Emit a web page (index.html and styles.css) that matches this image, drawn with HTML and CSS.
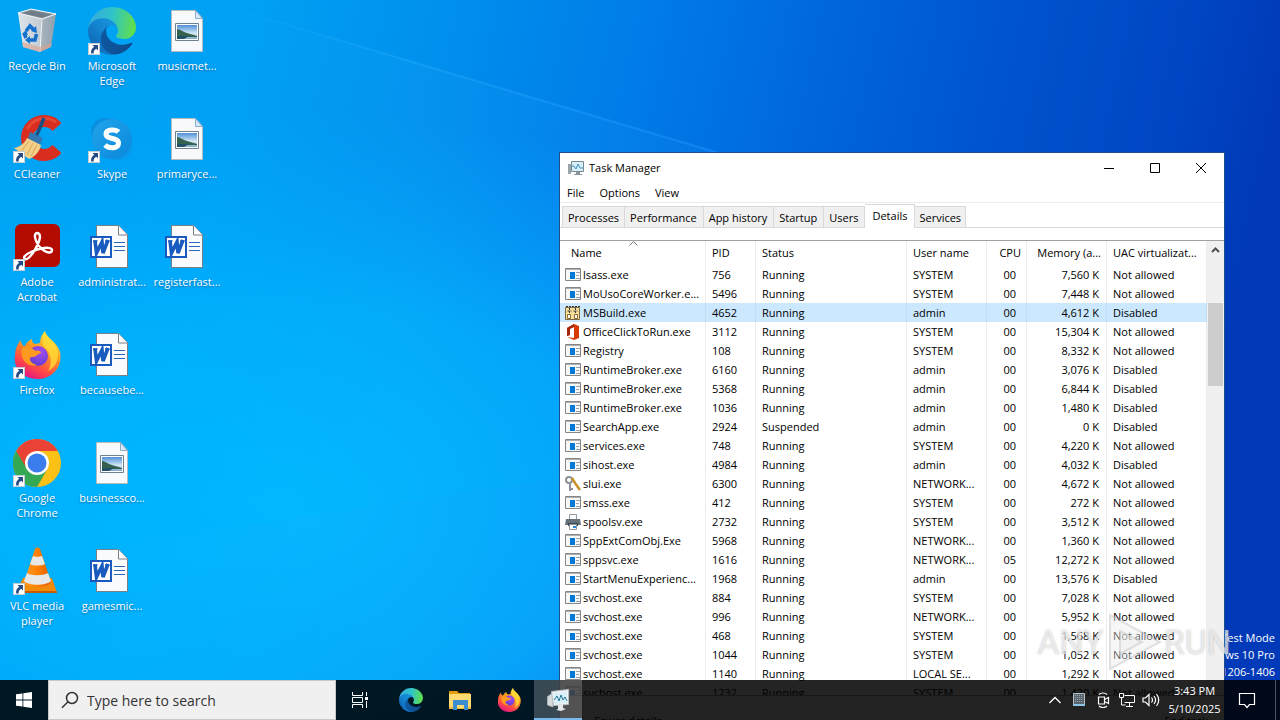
FILE: index.html
```html
<!DOCTYPE html>
<html lang="en">
<head>
<meta charset="utf-8">
<title>Desktop</title>
<link rel="stylesheet" href="styles.css">
</head>
<body>
<svg class="defs" aria-hidden="true">
  <defs>
    <linearGradient id="sky" x1="0" y1="0" x2="1" y2="0.12">
      <stop offset="0" stop-color="#00a4f2"/><stop offset=".2" stop-color="#00a0f4"/><stop offset=".36" stop-color="#008eec"/>
      <stop offset=".5" stop-color="#007ce8"/><stop offset=".66" stop-color="#0064da"/><stop offset=".8" stop-color="#0052cc"/><stop offset=".92" stop-color="#0046c4"/><stop offset="1" stop-color="#003ab8"/>
    </linearGradient>
    <radialGradient id="glow" cx=".22" cy=".7" r=".55">
      <stop offset="0" stop-color="#00b8ff"/><stop offset=".5" stop-color="#00b4ff" stop-opacity=".75"/><stop offset="1" stop-color="#00a8ff" stop-opacity="0"/>
    </radialGradient>
    <linearGradient id="beam" x1="0" y1="0" x2="1" y2="0">
      <stop offset="0" stop-color="#2cb8ff" stop-opacity="0"/><stop offset=".4" stop-color="#2cb0ff" stop-opacity=".5"/><stop offset="1" stop-color="#2090ff" stop-opacity=".6"/>
    </linearGradient>
    <linearGradient id="edgeA" x1="0" y1="0" x2="1" y2="0"><stop offset="0" stop-color="#0c59a4"/><stop offset="1" stop-color="#114a8b"/></linearGradient>
    <linearGradient id="edgeC" x1="1" y1="0" x2="0" y2="1"><stop offset="0" stop-color="#1b9de2"/><stop offset=".5" stop-color="#1383d0"/><stop offset="1" stop-color="#0b5aa8"/></linearGradient>
    <linearGradient id="edgeB" x1="0" y1="0.3" x2="1" y2="0.4"><stop offset="0" stop-color="#35a9e0"/><stop offset=".5" stop-color="#2fc3c8"/><stop offset="1" stop-color="#62e04a"/></linearGradient>
    <linearGradient id="ffx" x1=".8" y1="0" x2=".3" y2="1"><stop offset="0" stop-color="#fff04a"/><stop offset=".4" stop-color="#ff9a1f"/><stop offset=".75" stop-color="#ff4747"/><stop offset="1" stop-color="#e31587"/></linearGradient>
    <radialGradient id="ffp" cx=".6" cy=".3" r=".8"><stop offset="0" stop-color="#a44df0"/><stop offset="1" stop-color="#5a3bd0"/></radialGradient>
    <linearGradient id="skp" x1="0" y1="0" x2="1" y2="1"><stop offset="0" stop-color="#22a6ea"/><stop offset="1" stop-color="#0a86dc"/></linearGradient>
    <linearGradient id="bin" x1="0" y1="0" x2="1" y2="0"><stop offset="0" stop-color="#dfe6ea"/><stop offset=".6" stop-color="#c3ccd3"/><stop offset=".61" stop-color="#a8b4bd"/><stop offset="1" stop-color="#8fa0ad"/></linearGradient>
    <linearGradient id="cone" x1="0" y1="0" x2="1" y2="0"><stop offset="0" stop-color="#ff9a2a"/><stop offset=".5" stop-color="#ff8000"/><stop offset="1" stop-color="#e05e00"/></linearGradient>
    <linearGradient id="photo" x1="0" y1="0" x2="0" y2="1"><stop offset="0" stop-color="#4f90d8"/><stop offset=".6" stop-color="#d5e8f5"/><stop offset="1" stop-color="#7fa9c4"/></linearGradient>

    <symbol id="shortcut" viewBox="0 0 12 12"><path fill="#fff" d="M0 0h12v12H0z"/><path fill="none" stroke="#8a9aa6" d="M.5.5h11v11H.5z" stroke-opacity=".5"/><path fill="#264a86" d="M4.500 2H10v5.500L8.300 5.800C6 7 5.500 8.500 5.700 10.500H3.200C2.500 7.500 4 5.300 6.200 3.700z"/></symbol>

    <symbol id="recycle" viewBox="0 0 48 48">
      <path fill="url(#bin)" d="M5 6l5 34 17 5 11-5 5-33z"/>
      <path fill="#8e9aa3" d="M5 6l13-4 25 5-14 5z"/><path fill="#717d86" d="M9 6.500l9-3 21 4-10 3z"/>
      <path fill="none" stroke="#f3f7f9" d="M5 6l13-4 25 5-14 5zM29 12l-2 33"/>
      <path fill="#e0a08c" opacity=".6" d="M9 35l18 5v5l-17-5zM27 40l12-4-1 4-11 5z"/>
      <g fill="none" stroke="#1571ce" stroke-width="3.600"><path d="M13 24l4-5 4 4M23.500 27l-1.500 6h-6M11 26l2 5"/></g>
      <path fill="#1571ce" d="M23 19l1 7-6-2zM17 29v8l-5-4zM9 27l4-4 2 5z"/>
    </symbol>
    <symbol id="edge" viewBox="4.500 4.500 256.500 256.500">
      <path fill="url(#edgeA)" d="M235.680 195.460a93.730 93.730 0 0 1-10.540 4.710 101.870 101.870 0 0 1-35.900 6.460c-47.320 0-88.540-32.550-88.540-74.320A31.480 31.480 0 0 1 117.130 105c-42.800 1.800-53.800 46.400-53.800 72.530 0 73.880 68.090 81.370 82.760 81.370 7.910 0 19.840-2.300 27-4.560l1.310-.44A128.340 128.340 0 0 0 241 201.100a4 4 0 0 0-5.320-5.640z"/>
      <path fill="url(#edgeC)" d="M110.340 246.340A79.200 79.200 0 0 1 87.600 225a80.720 80.720 0 0 1 29.530-120c3.120-1.470 8.450-4.130 15.540-4a32.350 32.350 0 0 1 25.690 13 31.880 31.880 0 0 1 6.360 18.660c0-.21 24.460-79.600-80-79.600-43.900 0-80 41.660-80 78.210a130.150 130.150 0 0 0 12.110 56 128 128 0 0 0 156.380 67.110 75.550 75.550 0 0 1-62.780-8z"/>
      <path fill="url(#edgeB)" d="M156.940 153.780c-.81 1.050-3.300 2.500-3.300 5.660 0 2.610 1.700 5.120 4.720 7.230 14.380 10 41.490 8.680 41.560 8.680a59.560 59.560 0 0 0 30.270-8.350A61.380 61.380 0 0 0 260.620 114c.26-22.410-8-37.310-11.340-43.910C228.090 28.760 182.350 4.920 132.610 4.920a128 128 0 0 0-128 126.200c.48-36.540 36.800-66.050 80-66.050 3.500 0 23.460.34 42 10.070 16.340 8.580 24.900 18.940 30.850 29.210 6.180 10.670 7.280 24.150 7.280 29.520s-2.740 13.330-7.800 19.910z"/>
    </symbol>
    <symbol id="image-file" viewBox="0 0 48 48">
      <path fill="#f8f9fa" stroke="#b3bcc3" d="M8.500 3.500h24l7 8v33h-31z"/><path fill="#d4eafa" stroke="#8facc2" d="M32.500 3.500v8h7z"/>
      <path fill="#fff" stroke="#6e8192" d="M12.500 16.500h23v17h-23z"/><path fill="url(#photo)" d="M14 18h20v14H14z"/><path fill="#35614f" d="M14 22c3 0 6 3 10 4l10 3v1H14z"/><path fill="#24516a" d="M14 29h12l-5 3h-7z"/>
    </symbol>
    <symbol id="word-file" viewBox="0 0 48 48">
      <path fill="#fafbfc" stroke="#777f87" d="M8.500 2.500h22l9 9v33h-31z"/><path fill="#fff" stroke="#777f87" d="M30.500 2.500v9.500h9"/>
      <path stroke="#2b66b8" d="M26 19.500h11M26 23.500h11M26 27.500h11"/>
      <path fill="#fff" stroke="#185abd" stroke-width="2" d="M3 14h20v20H3z"/><path fill="none" stroke="#185abd" stroke-width="3.600" d="M7 17.500l1.500 12.500 5.500-11 1 11 5-13"/><path fill="none" stroke="#185abd" stroke-width="1.500" d="M5 18h4.500M17 18h4.500"/>
    </symbol>
    <symbol id="ccleaner" viewBox="0 0 48 48">
      <path fill="none" stroke="#d92d20" stroke-width="12" d="M44 12A17 17 0 1 0 44 34"/><path fill="none" stroke="#f05a42" stroke-width="3" d="M43 7A20 20 0 0 0 14 14" opacity=".6"/>
      <path stroke="#1a4f83" stroke-width="3.500" d="M31 3L23 22"/><path fill="#3278b2" d="M17 17l13 6-3 7-12-6z"/>
      <path fill="#f3cf8a" d="M14 23l14 7c-1 6-6 12-12 14L1 33c6-1 11-5 13-10z"/><path stroke="#d8a650" fill="none" d="M16 26L8 37M20 28l-6 12M24 30l-6 11"/>
    </symbol>
    <symbol id="skype" viewBox="0 0 48 48">
      <circle cx="17" cy="17" r="14" fill="#0b8fe0"/><circle cx="30" cy="31" r="14" fill="#0a98e8"/><circle cx="24" cy="24" r="20" fill="url(#skp)"/>
      <path fill="none" stroke="#fff" stroke-width="5" d="M30.500 17c-3-3-12.500-3-12.500 2 0 6 12.500 3 12.500 9 0 6-9.500 6-13.500 2"/>
    </symbol>
    <symbol id="acrobat" viewBox="0 0 48 48">
      <rect x="2" y="1" width="45" height="43" rx="6" fill="#b30b00"/>
      <path fill="none" stroke="#fff" stroke-width="2.400" d="M24 10c-4 0-2 10 5 16 6 5 10 4 10 1 0-4-14-2-21 2-7 3-8 6-6 7 4 2 14-14 15-22 0-3-1-4-3-4z"/>
    </symbol>
    <symbol id="firefox" viewBox="0 0 48 48">
      <path fill="url(#ffx)" d="M8 9c0 4 2 6 4 6 2-4 4-6 7-7 0 3 1 4 3 5l5-1c0-5 2-9 5-12 0 6 12 10 15 21 3 15-8 27-23 27C10 48 0 37 2 25c0-7 3-13 6-16z"/>
      <circle cx="25" cy="25" r="10" fill="url(#ffp)"/>
      <path fill="#ff9a20" d="M9 17c5-3 10 0 14 3 2-1 5 0 5 2-3 0-4 4-9 4-4 0-2 7 5 8-8 3-18-5-15-17z"/>
      <path fill="#ffdf38" d="M32 0c1 7 12 10 13 23 0 9-5 15-10 17 5-8 3-19-4-24-2-5-2-11 1-16z" opacity=".75"/>
    </symbol>
    <symbol id="chrome" viewBox="0 0 48 48">
      <circle cx="24" cy="24" r="24" fill="#fbc116"/><path fill="#ea4335" d="M3.200 12A24 24 0 0 1 44.800 12L24 12l-11 18z"/><path fill="#34a853" d="M3.200 12L14 30l10 6 10.400-6L24 48A24 24 0 0 1 3.200 12z"/>
      <circle cx="24" cy="24" r="12" fill="#fff"/><circle cx="24" cy="24" r="9.500" fill="#3b7ded"/>
    </symbol>
    <symbol id="vlc" viewBox="0 0 48 48">
      <path fill="#f28a0a" d="M10 31h29l5 15H3z"/><path fill="#c85a00" d="M3 44h41v2H3z"/>
      <path fill="url(#cone)" d="M22 2c1-2 4-2 5 0l11 33c-3 7-24 7-27 0z"/><path fill="#e8e8e8" d="M20 9c2 1 7 1 9 0l3 8c-3 2-12 2-15 0zM14 26c4 3 16 3 21 0l3 8c-5 5-22 5-27 0z"/>
    </symbol>

    <symbol id="app" viewBox="0 0 16 16"><path fill="#f8f8f8" stroke="#858585" d="M.5 1.500h15v12H.5z"/><path stroke="#b0b0b0" d="M1 2.500h14"/><path fill="#0078d7" d="M5 5h5v7H5z"/><path stroke="#98a0a8" d="M11 5.500h4M11 8.500h3M11 11.500h4"/></symbol>
    <symbol id="build" viewBox="0 0 16 16"><path fill="#f7df9b" stroke="#7b6a42" d="M.5 2.500h14v12H.5z"/><path fill="none" stroke="#333" stroke-dasharray="2 1" d="M1 1.500h14M4.500 3v5M10.500 3v5M2.500 6h4M8.500 6h4"/><path fill="#fff" stroke="#946b2f" d="M2.500 9.500h3v4h-3zM9.500 9.500h3v4h-3z"/></symbol>
    <symbol id="office" viewBox="0 0 16 16"><path fill="#d83b01" d="M9 0l5 2v12l-5 2-7-3 7 1V3L5 4v7l-3 1V4z"/><path fill="#a4260a" d="M9 0L2 4v8l3-1V5l4-2z"/></symbol>
    <symbol id="keys" viewBox="0 0 16 16"><circle cx="4" cy="4" r="3" fill="none" stroke="#8b929a" stroke-width="2"/><path stroke="#8b929a" stroke-width="2" d="M5 7v8M5 13h3"/><path fill="none" stroke="#c9932c" stroke-width="2.500" d="M7 2l3 5 5 7"/></symbol>
    <symbol id="printer" viewBox="0 0 16 16"><path fill="#fff" stroke="#929aa1" d="M4.500.5h7v5h-7z"/><path fill="#66717a" d="M1 5h14l1 6H0z"/><path fill="#3c454d" d="M3 9h10v3H3z"/><path fill="#fff" stroke="#8e969d" d="M4.500 10.500h7v5h-7z"/><path fill="#2686d8" d="M8 12h3v2H8z"/></symbol>
    <symbol id="monitor" viewBox="0 0 16 16"><path fill="#9ca5ac" d="M0 4h3v10H0z"/><path fill="#d8eef9" stroke="#788993" d="M3.500 1.500h12v10h-12z"/><path fill="none" stroke="#3d94bf" d="M4 6h2l2 3 2-5 2 4h3"/><path fill="#89949c" d="M8 12h4v2h2v1H6v-1h2z"/></symbol>

    <symbol id="start" viewBox="0 0 16 16"><path fill="#fff" d="M0 2.300L6.500 1.400v6.200H0zM7.300 1.300L16 0v7.600H7.300zM0 8.400h6.500v6.200L0 13.700zM7.300 8.400H16V16l-8.700-1.300z"/></symbol>
    <symbol id="lens" viewBox="0 0 18 18"><path fill="none" stroke="#333" stroke-width="1.500" d="M6.800 11L1 16.800M16.500 7a5.500 5.500 0 1 1-11 0a5.500 5.500 0 1 1 11 0z"/></symbol>
    <symbol id="taskview" viewBox="0 0 18 16"><path fill="none" stroke="#fff" d="M1.500 0v3.500h10V0M1.500 16v-3.500h10V16M1.500 5.500h10v5h-10zM15.500 0v4M15.500 9v7"/><path fill="#fff" d="M14 5h3v3h-3z"/></symbol>
    <symbol id="folder" viewBox="0 0 24 24"><path fill="#e39b10" d="M1 3h8l2 2h11v5H1z"/><path fill="#ffda70" d="M1 6h22v15H1z"/><path fill="#f5bd45" d="M1 19h22v2H1z"/><path fill="#3b8dd2" d="M5 12h15v10h-4v-5H9v5H5z"/><path fill="#ffda70" d="M9 17h7v3H9z"/></symbol>
    <symbol id="monitor-large" viewBox="0 0 24 24"><path fill="#d5dadd" stroke="#a9b1b6" d="M1.500 8.500L7 5v14l-5.500-2z"/><path fill="#f0f4f6" stroke="#b4bdc2" d="M5.500 3.500l17-2v15l-15 1z"/><path fill="#d9eff8" d="M8 5l13-1v11L8 16z"/><path fill="none" stroke="#247999" d="M8 12l3-4 2 5 2-6 2 5 2-3 2 4"/><path fill="#e4e8ea" d="M12 17l5-1v4l3 1-5 2-5-1 2-1z"/></symbol>
    <symbol id="chevron" viewBox="0 0 16 16"><path fill="none" stroke="#fff" stroke-width="1.300" d="M2.500 11L8 5.500l5.500 5.500"/></symbol>
    <symbol id="tablet" viewBox="0 0 16 16"><path fill="#59656c" stroke="#b4c0c6" d="M2.500 1.500h11v12h-11z"/><path stroke="#98a5ac" stroke-dasharray="1 1" d="M4 3.500h8M4 5.500h8M4 7.500h8M4 9.500h8"/><path stroke="#8cc6e4" stroke-width="2" d="M2 13h12"/></symbol>
    <symbol id="meet" viewBox="0 0 16 16"><path fill="none" stroke="#fff" stroke-width="1.200" d="M3.500 5h6v7h-6zM9.500 7.500l4-2v6l-4-2M4 2.500c2-2 6-2 8 0M4 14c2 2 6 2 8 0"/></symbol>
    <symbol id="network" viewBox="0 0 16 16"><path fill="none" stroke="#fff" d="M5.500 3.500h10v7h-10M.5 1.500h4v4h-4zM2.500 6v7h4M10.500 11v3M7 14.500h7"/></symbol>
    <symbol id="volume" viewBox="0 0 18 16"><path fill="none" stroke="#fff" stroke-width="1.200" d="M1 6h2.500L7 2.500v11L3.500 10H1zM9.500 5.500c1.200 1.500 1.200 3.500 0 5M12 4c2 2.500 2 5.500 0 8M14.500 2c3 4 3 8 0 12"/></symbol>
    <symbol id="note" viewBox="0 0 18 18"><path fill="none" stroke="#fff" stroke-width="1.200" d="M1.500 2.500h15v11h-5L9 16.500 6.500 13.500h-5z"/></symbol>
  </defs>
</svg>

<main class="desktop">
  <svg class="wallpaper" viewBox="0 0 1280 720" preserveAspectRatio="none" aria-hidden="true">
    <path fill="url(#sky)" d="M0 0h1280v720H0z"/>
    <path fill="url(#glow)" d="M0 0h1280v720H0z"/>
    <path fill="url(#beam)" opacity=".2" d="M200 0L720 153V720H200z"/>
    <path fill="none" stroke="url(#beam)" stroke-width="2" opacity=".8" d="M210 2L722 154"/>
    <path fill="url(#beam)" opacity=".15" d="M130 543L560 478v202H0z"/>
  </svg>

  <ul class="icons">
    <li><a class="shortcut" href="#"><span class="pic"><svg class="art"><use href="#recycle"/></svg></span>Recycle Bin</a></li>
    <li><a class="shortcut" href="#"><span class="pic"><svg class="art"><use href="#ccleaner"/></svg><svg class="arrow"><use href="#shortcut"/></svg></span>CCleaner</a></li>
    <li><a class="shortcut" href="#"><span class="pic"><svg class="art"><use href="#acrobat"/></svg><svg class="arrow"><use href="#shortcut"/></svg></span>Adobe<br>Acrobat</a></li>
    <li><a class="shortcut" href="#"><span class="pic"><svg class="art"><use href="#firefox"/></svg><svg class="arrow"><use href="#shortcut"/></svg></span>Firefox</a></li>
    <li><a class="shortcut" href="#"><span class="pic"><svg class="art"><use href="#chrome"/></svg><svg class="arrow"><use href="#shortcut"/></svg></span>Google<br>Chrome</a></li>
    <li><a class="shortcut" href="#"><span class="pic"><svg class="art"><use href="#vlc"/></svg><svg class="arrow"><use href="#shortcut"/></svg></span>VLC media<br>player</a></li>
    <li><a class="shortcut" href="#"><span class="pic"><svg class="art"><use href="#edge"/></svg><svg class="arrow"><use href="#shortcut"/></svg></span>Microsoft<br>Edge</a></li>
    <li><a class="shortcut" href="#"><span class="pic"><svg class="art"><use href="#skype"/></svg><svg class="arrow"><use href="#shortcut"/></svg></span>Skype</a></li>
    <li><a class="shortcut" href="#"><span class="pic"><svg class="art"><use href="#word-file"/></svg></span>administrat...</a></li>
    <li><a class="shortcut" href="#"><span class="pic"><svg class="art"><use href="#word-file"/></svg></span>becausebe...</a></li>
    <li><a class="shortcut" href="#"><span class="pic"><svg class="art"><use href="#image-file"/></svg></span>businessco...</a></li>
    <li><a class="shortcut" href="#"><span class="pic"><svg class="art"><use href="#word-file"/></svg></span>gamesmic...</a></li>
    <li><a class="shortcut" href="#"><span class="pic"><svg class="art"><use href="#image-file"/></svg></span>musicmet...</a></li>
    <li><a class="shortcut" href="#"><span class="pic"><svg class="art"><use href="#image-file"/></svg></span>primaryce...</a></li>
    <li><a class="shortcut" href="#"><span class="pic"><svg class="art"><use href="#word-file"/></svg></span>registerfast...</a></li>
  </ul>

  <p class="build">Test Mode<br>Windows 10 Pro<br>Build 19041.vb_release.191206-1406</p>

  <section class="window" aria-label="Task Manager">
    <header class="titlebar">
      <svg class="ico"><use href="#monitor"/></svg>
      <h1 class="title">Task Manager</h1>
      <button class="ctl" aria-label="Minimize"><svg class="glyph" viewBox="0 0 12 12"><path d="M1 6.500h10"/></svg></button>
      <button class="ctl" aria-label="Maximize"><svg class="glyph" viewBox="0 0 12 12"><path d="M1.500 1.500h9v9h-9z"/></svg></button>
      <button class="ctl" aria-label="Close"><svg class="glyph" viewBox="0 0 12 12"><path d="M1 1l10 10M11 1L1 11"/></svg></button>
    </header>
    <nav class="menu"><button>File</button><button>Options</button><button>View</button></nav>
    <div class="tabs" role="tablist">
      <button class="tab" role="tab">Processes</button><button class="tab" role="tab">Performance</button><button class="tab" role="tab">App history</button><button class="tab" role="tab">Startup</button><button class="tab" role="tab">Users</button><button class="tab active" role="tab" aria-selected="true">Details</button><button class="tab" role="tab">Services</button>
    </div>
    <div class="list">
      <table class="procs">
        <colgroup><col class="c-name"><col class="c-pid"><col class="c-status"><col class="c-user"><col class="c-cpu"><col class="c-mem"><col class="c-uac"></colgroup>
        <thead><tr><th class="name">Name<svg class="sort" viewBox="0 0 9 5"><path d="M.5 4.500l4-4 4 4"/></svg></th><th>PID</th><th>Status</th><th>User name</th><th class="cpu">CPU</th><th class="mem">Memory (a...</th><th>UAC virtualizat...</th></tr></thead>
        <tbody>
          <tr><td><svg class="ico"><use href="#app"/></svg>lsass.exe</td><td>756</td><td>Running</td><td>SYSTEM</td><td>00</td><td>7,560 K</td><td>Not allowed</td></tr>
          <tr><td><svg class="ico"><use href="#app"/></svg>MoUsoCoreWorker.e...</td><td>5496</td><td>Running</td><td>SYSTEM</td><td>00</td><td>7,448 K</td><td>Not allowed</td></tr>
          <tr class="selected"><td><svg class="ico"><use href="#build"/></svg>MSBuild.exe</td><td>4652</td><td>Running</td><td>admin</td><td>00</td><td>4,612 K</td><td>Disabled</td></tr>
          <tr><td><svg class="ico"><use href="#office"/></svg>OfficeClickToRun.exe</td><td>3112</td><td>Running</td><td>SYSTEM</td><td>00</td><td>15,304 K</td><td>Not allowed</td></tr>
          <tr><td><svg class="ico"><use href="#app"/></svg>Registry</td><td>108</td><td>Running</td><td>SYSTEM</td><td>00</td><td>8,332 K</td><td>Not allowed</td></tr>
          <tr><td><svg class="ico"><use href="#app"/></svg>RuntimeBroker.exe</td><td>6160</td><td>Running</td><td>admin</td><td>00</td><td>3,076 K</td><td>Disabled</td></tr>
          <tr><td><svg class="ico"><use href="#app"/></svg>RuntimeBroker.exe</td><td>5368</td><td>Running</td><td>admin</td><td>00</td><td>6,844 K</td><td>Disabled</td></tr>
          <tr><td><svg class="ico"><use href="#app"/></svg>RuntimeBroker.exe</td><td>1036</td><td>Running</td><td>admin</td><td>00</td><td>1,480 K</td><td>Disabled</td></tr>
          <tr><td><svg class="ico"><use href="#app"/></svg>SearchApp.exe</td><td>2924</td><td>Suspended</td><td>admin</td><td>00</td><td>0 K</td><td>Disabled</td></tr>
          <tr><td><svg class="ico"><use href="#app"/></svg>services.exe</td><td>748</td><td>Running</td><td>SYSTEM</td><td>00</td><td>4,220 K</td><td>Not allowed</td></tr>
          <tr><td><svg class="ico"><use href="#app"/></svg>sihost.exe</td><td>4984</td><td>Running</td><td>admin</td><td>00</td><td>4,032 K</td><td>Disabled</td></tr>
          <tr><td><svg class="ico"><use href="#keys"/></svg>slui.exe</td><td>6300</td><td>Running</td><td>NETWORK...</td><td>00</td><td>4,672 K</td><td>Not allowed</td></tr>
          <tr><td><svg class="ico"><use href="#app"/></svg>smss.exe</td><td>412</td><td>Running</td><td>SYSTEM</td><td>00</td><td>272 K</td><td>Not allowed</td></tr>
          <tr><td><svg class="ico"><use href="#printer"/></svg>spoolsv.exe</td><td>2732</td><td>Running</td><td>SYSTEM</td><td>00</td><td>3,512 K</td><td>Not allowed</td></tr>
          <tr><td><svg class="ico"><use href="#app"/></svg>SppExtComObj.Exe</td><td>5968</td><td>Running</td><td>NETWORK...</td><td>00</td><td>1,360 K</td><td>Not allowed</td></tr>
          <tr><td><svg class="ico"><use href="#app"/></svg>sppsvc.exe</td><td>1616</td><td>Running</td><td>NETWORK...</td><td>05</td><td>12,272 K</td><td>Not allowed</td></tr>
          <tr><td><svg class="ico"><use href="#app"/></svg>StartMenuExperienc...</td><td>1968</td><td>Running</td><td>admin</td><td>00</td><td>13,576 K</td><td>Disabled</td></tr>
          <tr><td><svg class="ico"><use href="#app"/></svg>svchost.exe</td><td>884</td><td>Running</td><td>SYSTEM</td><td>00</td><td>7,028 K</td><td>Not allowed</td></tr>
          <tr><td><svg class="ico"><use href="#app"/></svg>svchost.exe</td><td>996</td><td>Running</td><td>NETWORK...</td><td>00</td><td>5,952 K</td><td>Not allowed</td></tr>
          <tr><td><svg class="ico"><use href="#app"/></svg>svchost.exe</td><td>468</td><td>Running</td><td>SYSTEM</td><td>00</td><td>1,568 K</td><td>Not allowed</td></tr>
          <tr><td><svg class="ico"><use href="#app"/></svg>svchost.exe</td><td>1044</td><td>Running</td><td>SYSTEM</td><td>00</td><td>1,052 K</td><td>Not allowed</td></tr>
          <tr><td><svg class="ico"><use href="#app"/></svg>svchost.exe</td><td>1140</td><td>Running</td><td>LOCAL SE...</td><td>00</td><td>1,292 K</td><td>Not allowed</td></tr>
          <tr><td><svg class="ico"><use href="#app"/></svg>svchost.exe</td><td>1232</td><td>Running</td><td>SYSTEM</td><td>00</td><td>1,420 K</td><td>Not allowed</td></tr>
        </tbody>
      </table>
      <div class="scroll" aria-hidden="true"><svg class="up" viewBox="0 0 17 17"><path d="M5 11l3.500-3.500L12 11"/></svg><div class="thumb"></div></div>
    </div>
    <footer class="foot"><button>Fewer details</button><button>End task</button></footer>
  </section>

  <div class="watermark" aria-hidden="true"><span>ANY</span><svg class="play" viewBox="0 0 56 60"><path d="M4 3l50 27L4 57z"/><path d="M14 19l22 11-22 12z"/></svg><span>RUN</span></div>
</main>

<footer class="taskbar">
  <button class="start" aria-label="Start"><svg class="s16"><use href="#start"/></svg></button>
  <label class="search"><svg class="s18"><use href="#lens"/></svg><input type="text" placeholder="Type here to search" aria-label="Type here to search"></label>
  <div class="apps">
    <button class="app first" aria-label="Task View"><svg class="s18"><use href="#taskview"/></svg></button>
    <button class="app" aria-label="Microsoft Edge"><svg class="s24"><use href="#edge"/></svg></button>
    <button class="app" aria-label="File Explorer"><svg class="s24"><use href="#folder"/></svg></button>
    <button class="app" aria-label="Firefox"><svg class="s24"><use href="#firefox"/></svg></button>
    <button class="app open" aria-label="Task Manager"><svg class="s24"><use href="#monitor-large"/></svg></button>
  </div>
  <div class="tray">
    <button aria-label="Show hidden icons"><svg class="s16"><use href="#chevron"/></svg></button>
    <button aria-label="Touch keyboard"><svg class="s16"><use href="#tablet"/></svg></button>
    <button aria-label="Meet now"><svg class="s16"><use href="#meet"/></svg></button>
    <button aria-label="Network"><svg class="s16"><use href="#network"/></svg></button>
    <button aria-label="Volume"><svg class="s18"><use href="#volume"/></svg></button>
  </div>
  <time class="clock">3:43 PM<br>5/10/2025</time>
  <button class="notes" aria-label="Notifications"><svg class="s18"><use href="#note"/></svg></button>
  <button class="peek" aria-label="Show desktop"></button>
</footer>
</body>
</html>
```
FILE: styles.css
```css
* { box-sizing: border-box; }
body {
  margin: 0;
  height: 100vh;
  overflow: hidden;
  position: relative;
  font: 11px/15px "Open Sans", "Noto Sans", sans-serif;
  color: #000;
}
button { border: 0; margin: 0; padding: 0; background: none; font: inherit; color: inherit; }
.defs { position: absolute; width: 0; height: 0; }

.desktop { position: relative; height: 100%; overflow: hidden; }
.wallpaper { position: absolute; inset: 0; width: 100%; height: 100%; }

.icons {
  position: relative;
  display: grid;
  grid-auto-flow: column;
  grid-template-rows: repeat(6, 108px);
  grid-auto-columns: 74px;
  column-gap: 1px;
  margin: 0;
  padding: 7px 0 0;
  list-style: none;
}
.shortcut {
  display: flex;
  flex-direction: column;
  align-items: center;
  text-align: center;
  white-space: nowrap;
  color: #fff;
  text-decoration: none;
  text-shadow: 0 1px 2px rgba(0, 40, 90, .5);
}
.pic { position: relative; width: 48px; height: 48px; margin-bottom: 3px; }
.art { display: block; width: 48px; height: 48px; }
.arrow { position: absolute; left: 0; bottom: 0; width: 12px; height: 12px; }

.build {
  position: absolute;
  right: 5px;
  bottom: 40px;
  margin: 0;
  color: #fff;
  text-align: right;
  line-height: 17px;
}

.window {
  position: absolute;
  top: 152px;
  right: 55px;
  width: 666px;
  border: 1px solid #1c4f8c;
  background: #fff;
}
.titlebar { display: flex; align-items: center; height: 29px; padding-left: 8px; }
.ico { width: 16px; height: 16px; flex: none; }
.title { flex: 1; margin: 0 0 0 5px; font-size: 11px; font-weight: 400; }
.ctl { width: 46px; height: 29px; display: grid; place-items: center; }
.glyph { width: 12px; height: 12px; fill: none; stroke: #000; }
.menu { display: flex; gap: 15px; height: 21px; padding: 1px 7px 0; border-bottom: 1px solid #ececec; }
.tabs { display: flex; align-items: flex-end; height: 25px; padding-left: 2px; border-bottom: 1px solid #d9d9d9; }
.tab { height: 21px; padding: 0 6px 0 5px; border: 1px solid #d9d9d9; border-width: 1px 1px 0 0; background: #f0f0f0; }
.tab:first-child { border-left-width: 1px; padding-right: 5px; }
.tab:last-child { padding: 0 4px; }
.tab.active { height: 24px; padding: 0 7px 3px; margin-bottom: -1px; background: #fff; }

.list { display: flex; align-items: flex-start; height: 456px; margin-top: 12px; border-top: 1px solid #a0a0a0; border-bottom: 1px solid #a0a0a0; overflow: hidden; }
.procs { flex: 1; width: 100%; min-width: 0; table-layout: fixed; border-collapse: separate; border-spacing: 0; }
.c-name { width: 146px; }
.c-pid { width: 50px; }
.c-user { width: 80px; }
.c-cpu { width: 40px; }
.c-mem { width: 80px; }
.c-uac { width: 100px; }
.procs th, .procs td { padding: 0 0 0 6px; border-right: 1px solid #ececec; font-weight: 400; text-align: left; white-space: nowrap; overflow: hidden; }
.procs th { height: 24px; padding-bottom: 1px; position: relative; }
.procs td { height: 19px; line-height: 17px; }
.procs th.name { padding-left: 11px; }
.procs td:first-child { padding-left: 5px; }
.procs td .ico { vertical-align: -4px; margin-right: 2px; }
.procs th.cpu, .procs th.mem { text-align: right; padding: 0 5px 1px 0; }
.procs td:nth-child(5) { text-align: right; padding: 0 10px 0 0; }
.procs td:nth-child(6) { text-align: right; padding: 0 7px 0 0; }
.procs .selected td { background: #cce8ff; border-right-color: #c2def5; }
.sort { position: absolute; top: 0; left: 50%; margin-left: -4px; width: 9px; height: 5px; fill: none; stroke: #777; }
.scroll { flex: none; width: 17px; align-self: stretch; background: #f0f0f0; }
.up { display: block; width: 17px; height: 17px; fill: none; stroke: #505050; stroke-width: 2; }
.thumb { height: 83px; margin: 45px 1px 0; background: #cdcdcd; }
.foot { display: flex; justify-content: space-between; align-items: center; height: 48px; padding: 0 16px 0 34px; background: #f0f0f0; }

.watermark {
  position: absolute;
  right: 49px;
  bottom: 48px;
  display: flex;
  align-items: center;
  gap: 2px;
  font: 34px/56px Roboto, "Liberation Sans", sans-serif;
  color: rgba(255, 255, 255, .65);
  text-shadow: 0 0 2px rgba(120, 120, 120, .5);
}
.play { width: 56px; height: 60px; fill: rgba(235, 235, 235, .4); stroke: rgba(190, 190, 190, .45); stroke-width: 2; }

.taskbar {
  position: absolute;
  left: 0;
  right: 0;
  bottom: 0;
  display: flex;
  align-items: stretch;
  height: 40px;
  background: rgba(0, 0, 0, .86);
  color: #fff;
}
.s16 { display: block; width: 16px; height: 16px; }
.s18 { display: block; width: 18px; height: 18px; }
.s24 { display: block; width: 24px; height: 24px; }
.start, .app { width: 48px; display: grid; place-items: center; }
.search { display: flex; align-items: center; gap: 8px; width: 288px; padding-left: 12px; background: #f0f0f0; border: 1px solid #c8c8c8; }
.search input { flex: 1; min-width: 0; border: 0; padding: 2px 0 0; background: none; outline: 0; font: 14px/20px "Open Sans", sans-serif; }
.search input::placeholder { color: #333; opacity: 1; }
.apps { display: flex; gap: 1px; }
.app.first { margin-right: 2px; }
.app.open { background: rgba(255, 255, 255, .22); border-bottom: 2px solid #76b9ed; padding-top: 2px; }
.tray { display: flex; margin-left: auto; }
.tray button { width: 24px; display: grid; place-items: center; }
.clock { width: 61px; padding-left: 2px; text-align: center; line-height: 18px; padding-top: 2px; }
.notes { width: 46px; display: grid; place-items: center; }
.peek { width: 5px; margin-left: 5px; border-left: 1px solid #4a5563; }
```
